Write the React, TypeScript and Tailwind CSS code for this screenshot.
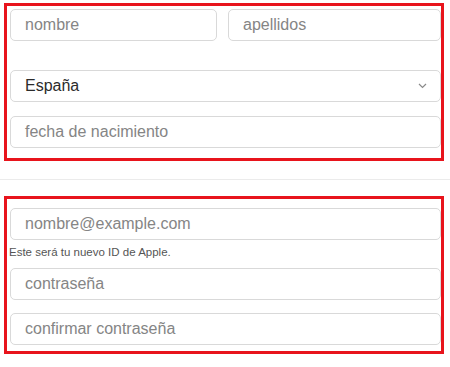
import React from 'react';

const Field: React.FC<{ placeholder: string; className?: string }> = ({ placeholder, className = '' }) => (
  <div
    className={`h-[32px] rounded-[5px] border border-[#d9d9d9] bg-white flex items-center pl-[14px] text-[16px] text-[#858585] ${className}`}
  >
    {placeholder}
  </div>
);

const App: React.FC = () => {
  return (
    <div className="w-[450px] h-[367px] bg-white pt-[3px] font-['Liberation_Sans',Arial,sans-serif] overflow-hidden">
      {/* Personal data */}
      <div className="ml-[4px] w-[440px] border-[3px] border-[#e8141c] pl-[3px] pt-[3px] pb-[10px] flex flex-col">
        <div className="flex gap-[11px]">
          <Field placeholder="nombre" className="w-[207px]" />
          <Field placeholder="apellidos" className="flex-1" />
        </div>
        <div className="mt-[29px] h-[32px] rounded-[5px] border border-[#d9d9d9] bg-white flex items-center justify-between pl-[14px] pr-[13px] text-[16px] text-[#2b2b2b]">
          <span>España</span>
          <svg width="9" height="6" viewBox="0 0 9 6" fill="none">
            <path d="M1 1l3.5 3.5L8 1" stroke="#8a8a8a" strokeWidth="1.2" />
          </svg>
        </div>
        <Field placeholder="fecha de nacimiento" className="mt-[14px]" />
      </div>

      <div className="mt-[18px] h-px bg-[#ebebeb]" />

      {/* Account data */}
      <div className="mt-[16px] ml-[4px] w-[440px] border-[3px] border-[#e8141c] pl-[3px] pt-[9px] pb-[6px] flex flex-col">
        <Field placeholder="nombre@example.com" />
        <p className="mt-[5px] h-[14px] -ml-[1px] text-[11.5px] leading-[14px] text-[#555555]">Este será tu nuevo ID de Apple.</p>
        <Field placeholder="contraseña" className="mt-[9px]" />
        <Field placeholder="confirmar contraseña" className="mt-[13px]" />
      </div>
    </div>
  );
};

export default App;
